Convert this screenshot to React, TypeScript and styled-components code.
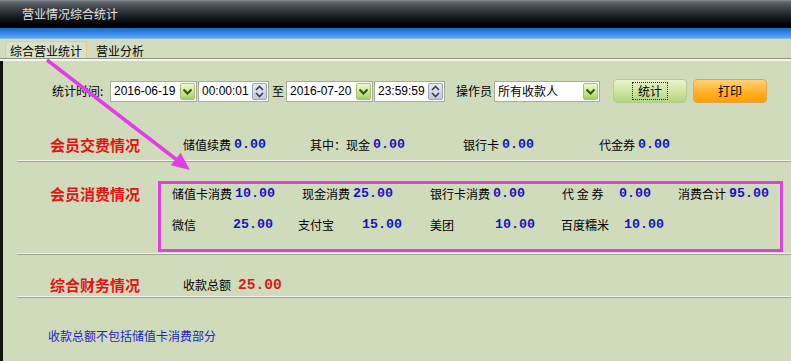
import React from 'react';
import styled, { createGlobalStyle } from 'styled-components';

const GlobalStyle = createGlobalStyle`
  html, body {
    margin: 0;
    padding: 0;
    background: #d0dbbb;
  }
  body {
    font-family: "Noto Sans CJK SC", "Liberation Sans", sans-serif;
    font-size: 12px;
    color: #000;
  }
`;

const Window = styled.div`
  position: relative;
  width: 791px;
  height: 361px;
  overflow: hidden;
  background: #d0dbbb;
  display: flex;
  flex-direction: column;
`;

const TitleBar = styled.div`
  flex: none;
  height: 28px;
  padding-left: 22px;
  display: flex;
  align-items: center;
  color: #e2e2e2;
  line-height: 14px;
  background: linear-gradient(#8a8e95 0, #62666d 2px, #3a3e45 9px, #14181d 18px, #000 25px);
`;

const BlueStrip = styled.div`
  flex: none;
  height: 11px;
  background: linear-gradient(#1c68c6, #3a8ee8 55%, #5ba8ee 90%, #9cc8e8);
`;

const TabBar = styled.div`
  flex: none;
  box-sizing: border-box;
  height: 20px;
  padding-left: 5px;
  display: flex;
  align-items: flex-end;
  gap: 4px;
  background: #d2dcbf;
  border-bottom: 1px solid #8c9484;
`;

const Tab = styled.div<{ $active?: boolean }>`
  height: 16px;
  line-height: 17px;
  padding: 0 4px;
  border: 1px solid ${(p) => (p.$active ? '#f0c48a' : 'transparent')};
  border-bottom: none;
  border-radius: 3px 3px 0 0;
  background: ${(p) => (p.$active ? '#dae1c9' : 'transparent')};
`;

const WhiteLine = styled.div`
  flex: none;
  height: 2px;
  background: #f6f8ee;
`;

const Body = styled.div`
  flex: 1;
  display: flex;
  flex-direction: column;
  border-left: 3px solid #111;
`;

const Toolbar = styled.div`
  margin-top: 18px;
  height: 24px;
  padding-left: 49px;
  display: flex;
  align-items: center;
`;

const ToolLabel = styled.span<{ $w: number; $ml?: number }>`
  width: ${(p) => p.$w}px;
  margin-left: ${(p) => p.$ml || 0}px;
  line-height: 16px;
  white-space: nowrap;
`;

const InputBox = styled.div<{ $w: number; $ml?: number }>`
  box-sizing: border-box;
  width: ${(p) => p.$w}px;
  height: 21px;
  margin-left: ${(p) => p.$ml || 0}px;
  padding: 1px 1px 1px 3px;
  display: flex;
  align-items: center;
  justify-content: space-between;
  background: #fff;
  border: 1px solid #a6ae96;
  font-family: "Liberation Sans", sans-serif;
  font-size: 12px;
`;

const SelectText = styled.span`
  font-family: "Noto Sans CJK SC", sans-serif;
  line-height: 16px;
`;

const DropBtn = styled.div`
  box-sizing: border-box;
  width: 15px;
  height: 17px;
  display: flex;
  align-items: center;
  justify-content: center;
  border: 1px solid #a4c07c;
  border-radius: 2px;
  background: linear-gradient(#eef8cc, #c8e48c 60%, #a8cc64);
`;

const SpinBtn = styled.div`
  box-sizing: border-box;
  width: 15px;
  height: 17px;
  display: flex;
  align-items: center;
  justify-content: center;
  border: 1px solid #9aa2bc;
  border-radius: 2px;
  background: linear-gradient(#e8eaf2, #c4c8d8);
`;

const Button = styled.div<{ $tone: 'green' | 'orange'; $ml: number }>`
  box-sizing: border-box;
  width: 74px;
  height: 24px;
  margin-left: ${(p) => p.$ml}px;
  display: flex;
  align-items: center;
  justify-content: center;
  border-radius: 4px;
  border: 1px solid ${(p) => (p.$tone === 'green' ? '#b6cc98' : '#e6a448')};
  background: ${(p) =>
    p.$tone === 'green'
      ? 'linear-gradient(#eaf4cc, #cfe6a4 50%, #b4d67c)'
      : 'linear-gradient(#ffd27a, #ffb42c 50%, #ff9e00)'};
  line-height: 16px;
`;

const FocusText = styled.span`
  padding: 0 5px;
  border: 1px dotted #333;
`;

const Section = styled.div<{ $h: number; $pt?: number; $pb?: number; $end?: boolean }>`
  box-sizing: border-box;
  height: ${(p) => p.$h}px;
  padding: ${(p) => p.$pt || 0}px 0 ${(p) => p.$pb || 0}px 47px;
  display: flex;
  align-items: ${(p) => (p.$end ? 'flex-end' : 'flex-start')};
`;

const Heading = styled.div<{ $w: number; $mt?: number }>`
  flex: none;
  width: ${(p) => p.$w}px;
  margin-top: ${(p) => p.$mt || 0}px;
  height: 20px;
  line-height: 20px;
  color: #e41414;
  font-size: 15px;
  font-weight: bold;
`;

const FieldRow = styled.div`
  display: flex;
  align-items: center;
  height: 20px;
`;

const Field = styled.div<{ $w?: number }>`
  flex: none;
  width: ${(p) => (p.$w ? `${p.$w}px` : 'auto')};
  display: flex;
  align-items: center;
  gap: 3px;
`;

const Label = styled.span<{ $w?: number }>`
  flex: none;
  width: ${(p) => (p.$w ? `${p.$w}px` : 'auto')};
  line-height: 20px;
  white-space: pre;
`;

const Value = styled.span<{ $red?: boolean }>`
  margin-left: ${(p) => (p.$red ? '4px' : '0')};
  font-family: "Liberation Mono", "DejaVu Sans Mono", monospace;
  font-weight: bold;
  font-size: ${(p) => (p.$red ? '14.6px' : '13.3px')};
  color: ${(p) => (p.$red ? '#d41c1c' : '#1414c4')};
  line-height: 20px;
`;

const Separator = styled.div`
  flex: none;
  margin-left: 14px;
  height: 0;
  border-top: 1px solid #f4f6ec;
  border-bottom: 1px solid #9ca490;
`;

const ConsumeBox = styled.div`
  box-sizing: border-box;
  width: 625px;
  height: 71px;
  padding: 0 0 0 11px;
  border: 3px solid #e23ee4;
  display: flex;
  flex-direction: column;
  gap: 11px;
`;

const Note = styled.div`
  margin-top: 30px;
  padding-left: 45px;
  line-height: 16px;
  color: #1a26c8;
`;

const Overlay = styled.svg`
  position: absolute;
  left: 0;
  top: 0;
  pointer-events: none;
`;

const Chevron = () => (
  <svg width="11" height="9" viewBox="0 0 11 9">
    <path d="M1.5 2.5 L5.5 6.5 L9.5 2.5" fill="none" stroke="#2c5410" strokeWidth="2" />
  </svg>
);

const Spin = () => (
  <svg width="9" height="13" viewBox="0 0 9 13">
    <path d="M1 5 L4.5 1.5 L8 5" fill="none" stroke="#3a3f58" strokeWidth="1.6" />
    <path d="M1 8 L4.5 11.5 L8 8" fill="none" stroke="#3a3f58" strokeWidth="1.6" />
  </svg>
);

const DateInput: React.FC<{ value: string; ml?: number }> = ({ value, ml }) => (
  <InputBox $w={87} $ml={ml}>
    <span>{value}</span>
    <DropBtn>
      <Chevron />
    </DropBtn>
  </InputBox>
);

const TimeInput: React.FC<{ value: string; ml?: number }> = ({ value, ml }) => (
  <InputBox $w={71} $ml={ml}>
    <span>{value}</span>
    <SpinBtn>
      <Spin />
    </SpinBtn>
  </InputBox>
);

export default function App() {
  return (
    <>
      <GlobalStyle />
      <Window>
        <TitleBar>营业情况综合统计</TitleBar>
        <BlueStrip />
        <TabBar>
          <Tab $active>综合营业统计</Tab>
          <Tab>营业分析</Tab>
        </TabBar>
        <WhiteLine />
        <Body>
          <Toolbar>
            <ToolLabel $w={58}>统计时间:</ToolLabel>
            <DateInput value="2016-06-19" />
            <TimeInput value="00:00:01" ml={1} />
            <ToolLabel $w={14} $ml={3}>至</ToolLabel>
            <DateInput value="2016-07-20" />
            <TimeInput value="23:59:59" ml={1} />
            <ToolLabel $w={38} $ml={11}>操作员</ToolLabel>
            <InputBox $w={106}>
              <SelectText>所有收款人</SelectText>
              <DropBtn>
                <Chevron />
              </DropBtn>
            </InputBox>
            <Button $tone="green" $ml={13}>
              <FocusText>统计</FocusText>
            </Button>
            <Button $tone="orange" $ml={6}>打印</Button>
          </Toolbar>

          <Section $h={57} $pb={5} $end>
            <Heading $w={133}>会员交费情况</Heading>
            <FieldRow>
              <Field $w={127}>
                <Label>储值续费</Label>
                <Value>0.00</Value>
              </Field>
              <Field $w={153}>
                <Label>其中：现金</Label>
                <Value>0.00</Value>
              </Field>
              <Field $w={136}>
                <Label>银行卡</Label>
                <Value>0.00</Value>
              </Field>
              <Field>
                <Label>代金券</Label>
                <Value>0.00</Value>
              </Field>
            </FieldRow>
          </Section>
          <Separator />

          <Section $h={91} $pt={19}>
            <Heading $w={108} $mt={3}>会员消费情况</Heading>
            <ConsumeBox>
              <FieldRow>
                <Field $w={130}>
                  <Label>储值卡消费</Label>
                  <Value>10.00</Value>
                </Field>
                <Field $w={128}>
                  <Label>现金消费</Label>
                  <Value>25.00</Value>
                </Field>
                <Field $w={132}>
                  <Label>银行卡消费</Label>
                  <Value>0.00</Value>
                </Field>
                <Field $w={116}>
                  <Label $w={54}>代 金 券</Label>
                  <Value>0.00</Value>
                </Field>
                <Field>
                  <Label>消费合计</Label>
                  <Value>95.00</Value>
                </Field>
              </FieldRow>
              <FieldRow>
                <Field $w={126}>
                  <Label $w={58}>微信</Label>
                  <Value>25.00</Value>
                </Field>
                <Field $w={132}>
                  <Label $w={61}>支付宝</Label>
                  <Value>15.00</Value>
                </Field>
                <Field $w={131}>
                  <Label $w={62}>美团</Label>
                  <Value>10.00</Value>
                </Field>
                <Field>
                  <Label $w={60}>百度糯米</Label>
                  <Value>10.00</Value>
                </Field>
              </FieldRow>
            </ConsumeBox>
          </Section>
          <Separator />

          <Section $h={41} $pb={1} $end>
            <Heading $w={133}>综合财务情况</Heading>
            <FieldRow>
              <Field>
                <Label>收款总额</Label>
                <Value $red>25.00</Value>
              </Field>
            </FieldRow>
          </Section>
          <Separator />

          <Note>收款总额不包括储值卡消费部分</Note>
        </Body>

        <Overlay width={791} height={361} viewBox="0 0 791 361">
          <line x1={47} y1={60} x2={177} y2={160} stroke="#e23ee6" strokeWidth={3.5} />
          <polygon points="190,170 170.8,165.3 180.6,152.7" fill="#e23ee6" />
        </Overlay>
      </Window>
    </>
  );
}
